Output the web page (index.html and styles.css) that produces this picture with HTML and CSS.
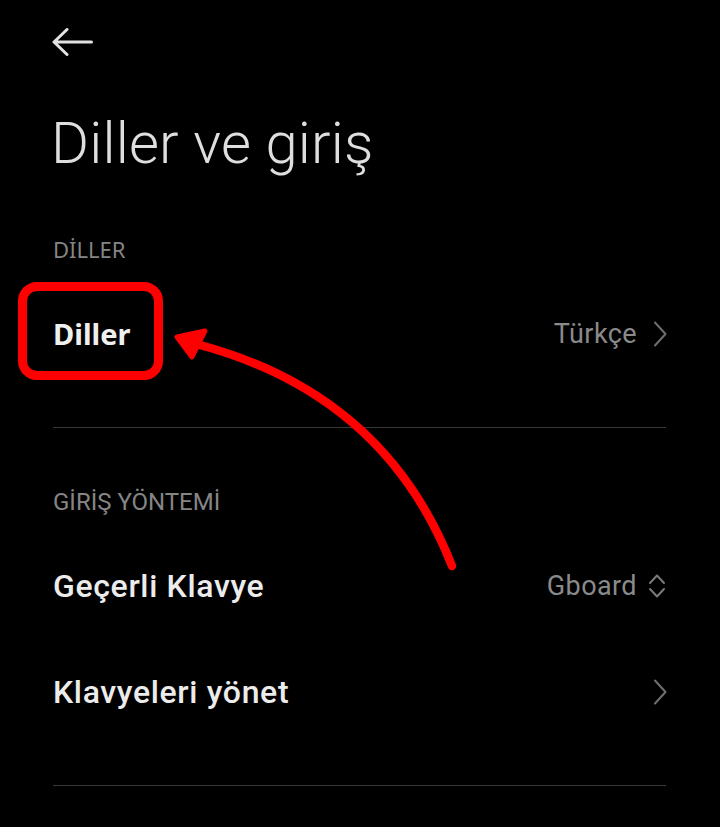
FILE: index.html
```html
<!DOCTYPE html>
<html lang="tr">
<head>
<meta charset="utf-8">
<title>Diller ve giriş</title>
<link rel="stylesheet" href="styles.css">
</head>
<body>
<div class="page">
  <header class="topbar">
    <svg class="back" width="42" height="28" viewBox="0 0 42 28" aria-label="Geri">
      <path d="M2 14 H39.5 M15 1.5 L2 14 L15 26.5" fill="none" stroke="#e2e2e2" stroke-width="3" stroke-linecap="round" stroke-linejoin="round"/>
    </svg>
  </header>

  <h1 class="title">Diller ve giriş</h1>

  <section class="group group-first">
    <div class="group-header header-noto">DİLLER</div>
    <div class="row">
      <span class="row-label label-bold">Diller</span>
      <span class="row-value">
        <span class="value-text">Türkçe</span>
        <svg class="chev" width="14" height="26" viewBox="0 0 14 26"><path d="M2 1.5 L12.5 13 L2 24.5" fill="none" stroke="#6e6e6e" stroke-width="2" stroke-linecap="round" stroke-linejoin="round"/></svg>
      </span>
    </div>
  </section>

  <div class="divider"></div>

  <section class="group">
    <div class="group-header">GİRİŞ YÖNTEMİ</div>
    <div class="row">
      <span class="row-label">Geçerli Klavye</span>
      <span class="row-value value-tight">
        <span class="value-text">Gboard</span>
        <svg class="updown" width="20" height="26" viewBox="0 0 20 26"><path d="M3 10 L10 2.5 L17 10 M3 16 L10 23.5 L17 16" fill="none" stroke="#7a7a7a" stroke-width="2" stroke-linecap="round" stroke-linejoin="round"/></svg>
      </span>
    </div>
    <div class="row">
      <span class="row-label">Klavyeleri yönet</span>
      <span class="row-value">
        <svg class="chev" width="14" height="26" viewBox="0 0 14 26"><path d="M2 1.5 L12.5 13 L2 24.5" fill="none" stroke="#6e6e6e" stroke-width="2" stroke-linecap="round" stroke-linejoin="round"/></svg>
      </span>
    </div>
  </section>

  <div class="divider"></div>

  <div class="highlight"></div>
  <svg class="annot" width="720" height="827" viewBox="0 0 720 827">
    <path d="M452 566 Q385 395 200 345" fill="none" stroke="#fe0000" stroke-width="8.5" stroke-linecap="round"/>
    <polygon points="177,337 205,331 192,357" fill="#fe0000" stroke="#fe0000" stroke-width="5" stroke-linejoin="round"/>
  </svg>
</div>
</body>
</html>
```

FILE: styles.css
```css
html, body {
  margin: 0;
  padding: 0;
  background: #000;
}

.page {
  position: relative;
  width: 720px;
  height: 827px;
  box-sizing: border-box;
  padding: 0 54px 0 53px;
  font-family: Roboto, "Liberation Sans", sans-serif;
  color: #ececec;
  overflow: hidden;
}

.topbar {
  height: 84px;
  display: flex;
  align-items: center;
}

.back {
  display: block;
  margin-left: -1px;
}

.title {
  margin: 24px 0 0 -2px;
  font-weight: 300;
  font-size: 58px;
  line-height: 70px;
  color: #dedede;
  letter-spacing: 0.2px;
}

.group-first {
  margin-top: 56px;
}

.group {
  display: flex;
  flex-direction: column;
}

.group-header {
  height: 30px;
  line-height: 30px;
  font-size: 24px;
  color: #858585;
  margin-bottom: 16px;
}

.header-noto {
  font-family: "Noto Sans", Roboto, sans-serif;
  font-size: 22px;
  margin-bottom: 17px;
}

.row {
  height: 106px;
  display: flex;
  align-items: center;
  justify-content: space-between;
}

.row-label {
  font-size: 32px;
  line-height: 40px;
  font-weight: 500;
  letter-spacing: 0.65px;
  color: #ececec;
}

.label-bold {
  font-family: "Noto Sans", Roboto, sans-serif;
  font-weight: 700;
  font-size: 29px;
  letter-spacing: 0;
  color: #efefef;
}

.row-value {
  display: flex;
  align-items: center;
  gap: 16px;
  margin-right: -1px;
}

.value-tight {
  gap: 10px;
}

.value-text {
  font-size: 27px;
  line-height: 32px;
  color: #8a8a8a;
  letter-spacing: 0.4px;
}

.chev, .updown {
  display: block;
}

.divider {
  height: 1px;
  background: #383838;
  margin-top: 40px;
}

.divider + .group {
  margin-top: 59px;
}

.highlight {
  position: absolute;
  left: 18px;
  top: 282px;
  width: 145px;
  height: 98px;
  box-sizing: border-box;
  border: 9px solid #fe0000;
  border-radius: 19px;
}

.annot {
  position: absolute;
  left: 0;
  top: 0;
  pointer-events: none;
}
```
